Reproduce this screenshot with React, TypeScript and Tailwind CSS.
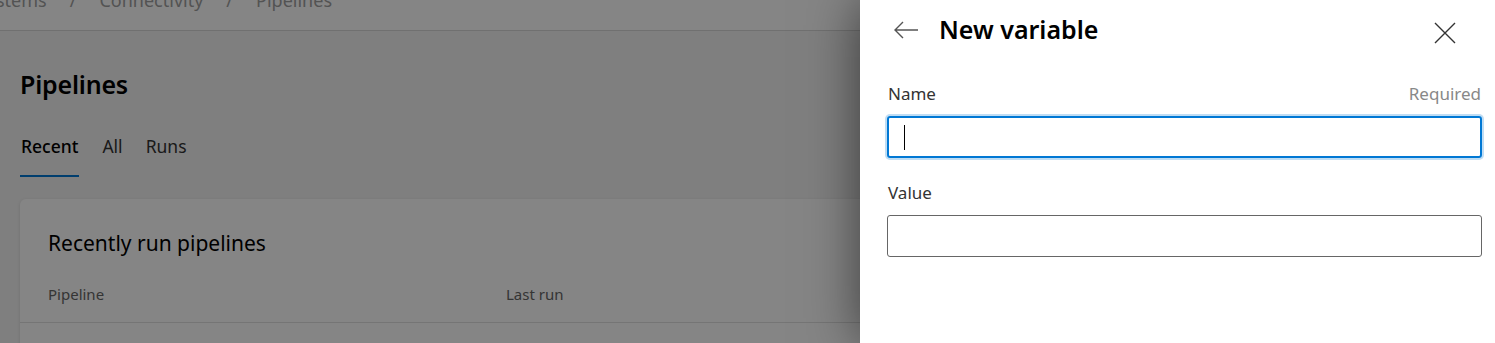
import React from "react";

const font = { fontFamily: '"Noto Sans", "Open Sans", sans-serif' };

export default function App() {
  return (
    <div className="relative w-[1495px] h-[343px] overflow-hidden bg-[#f4f4f4]" style={font}>
      {/* Background page */}
      <div className="flex flex-col">
        <div className="h-[31px] bg-white border-b border-[#d6d6d6] overflow-hidden">
          <div className="flex items-center gap-[23px] text-[18px] text-[#a0a0a0] -ml-[4px] -mt-[12px] leading-[24px]">
            <span>stems</span>
            <span>/</span>
            <span>Connectivity</span>
            <span>/</span>
            <span>Pipelines</span>
          </div>
        </div>
        <div className="px-[20px]">
          <h1 className="mt-[36px] text-[25px] font-semibold text-black leading-[34px] tracking-[-0.2px]">Pipelines</h1>
          <div className="mt-[33px] flex gap-[23px] text-[17.5px] text-[#333]">
            <div className="flex flex-col">
              <span className="font-medium text-black leading-[24px] px-[1px]">Recent</span>
              <div className="mt-[17px] h-[2px] bg-[#0078d4]"></div>
            </div>
            <span className="leading-[24px]">All</span>
            <span className="leading-[24px]">Runs</span>
          </div>
          <div className="mt-[22px] bg-white rounded-[6px] shadow-[0_1px_4px_rgba(0,0,0,0.12)] h-[200px]">
            <div className="pt-[30px] px-[28px] text-[21px] text-black leading-[28px]">Recently run pipelines</div>
            <div className="mt-[27px] px-[28px] flex text-[15px] text-[#666] leading-[20px]">
              <span className="w-[458px]">Pipeline</span>
              <span>Last run</span>
            </div>
            <div className="mt-[18px] border-t border-[#e0e0e0]"></div>
          </div>
        </div>
      </div>

      {/* Overlay */}
      <div className="absolute inset-0 bg-black/[0.48]"></div>

      {/* Panel */}
      <div className="absolute top-0 right-0 bottom-0 w-[635px] bg-white shadow-[0_0_50px_rgba(0,0,0,0.55)] flex flex-col px-[27px]">
        <div className="flex items-center h-[60px]">
          <svg width="26" height="18" viewBox="0 0 26 18" className="ml-[6px]" fill="none" stroke="#555" strokeWidth="1.4">
            <path d="M25 9H2M10 1L2 9l8 8" />
          </svg>
          <span className="ml-[20px] text-[25px] font-semibold text-black leading-none -mt-[1px]">New variable</span>
          <div className="flex-1"></div>
          <svg width="22" height="22" viewBox="0 0 22 22" className="mr-[12px] mt-[5px]" fill="none" stroke="#333" strokeWidth="1.4">
            <path d="M1 1l20 20M21 1L1 21" />
          </svg>
        </div>
        <div className="mt-[23px] flex items-center justify-between text-[17px] leading-[22px] px-[1px]">
          <span className="text-[#333]">Name</span>
          <span className="text-[#888] -mr-[14px]">Required</span>
        </div>
        <div className="mt-[11px] h-[42px] rounded-[3px] border-2 border-[#0078d4] shadow-[0_0_0_2px_rgba(0,120,212,0.25)] flex items-center pl-[15px] -mr-[14px]">
          <div className="w-[1px] h-[25px] bg-black"></div>
        </div>
        <div className="mt-[24px] text-[17px] leading-[22px] text-[#333] px-[1px]">Value</div>
        <div className="mt-[11px] h-[42px] rounded-[3px] border border-[#666] -mr-[14px]"></div>
      </div>
    </div>
  );
}
